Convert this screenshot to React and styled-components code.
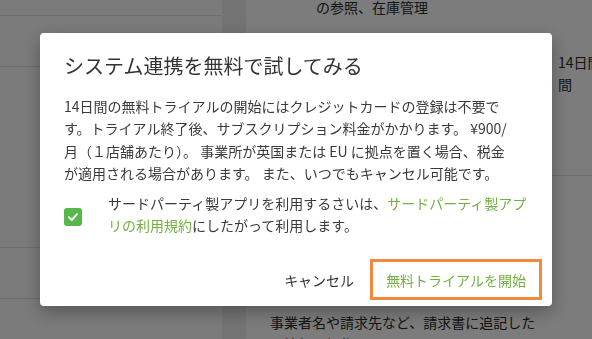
import React from "react";
import styled, { createGlobalStyle } from "styled-components";

const Global = createGlobalStyle`
  html, body { margin: 0; padding: 0; }
  body {
    font-family: "Noto Sans CJK JP", "Noto Sans", sans-serif;
    color: #333;
    overflow: hidden;
  }
`;

const App = () => {
  return (
    <>
      <Global />
      <Page>
        <Sidebar>
          <Row h={16} />
          <Row h={51} />
          <Row h={181} />
          <Row h={51} />
          <Row h={40} last />
        </Sidebar>
        <Gutter />
        <Main>
          <TopNote>の参照、在庫管理</TopNote>
          <CardRow>
            <CardCol />
            <CardCol>
              14日間の無料ト
              <br />
              間
            </CardCol>
          </CardRow>
          <BottomNote>
            事業者名や請求先など、請求書に追記した
            <br />
            い情報を編集します。
          </BottomNote>
        </Main>
      </Page>

      <Overlay>
        <Dialog>
          <Title>システム連携を無料で試してみる</Title>
          <Body>
            14日間の無料トライアルの開始にはクレジットカードの登録は不要です。トライアル終了後、サブスクリプション料金がかかります。 ¥900/月（１店舗あたり）。 事業所が英国または EU に拠点を置く場合、税金が適用される場合があります。 また、いつでもキャンセル可能です。
          </Body>
          <CheckRow>
            <CheckCell>
              <CheckBox>
                <svg width="12" height="12" viewBox="0 0 12 12">
                  <path
                    d="M2 6.3 L4.8 9 L10 3.2"
                    fill="none"
                    stroke="#fff"
                    strokeWidth="2"
                    strokeLinecap="round"
                    strokeLinejoin="round"
                  />
                </svg>
              </CheckBox>
            </CheckCell>
            <Label>
              サードパーティ製アプリを利用するさいは、
              <Link>サードパーティ製アプリの利用規約</Link>
              にしたがって利用します。
            </Label>
          </CheckRow>
          <Footer>
            <Button>キャンセル</Button>
            <Button primary>無料トライアルを開始</Button>
          </Footer>
        </Dialog>
      </Overlay>
    </>
  );
};

export default App;

const Page = styled.div`
  display: flex;
  width: 100%;
  height: 100vh;
  background: #f8f8f8;
`;

const Sidebar = styled.div`
  width: 222px;
  flex-shrink: 0;
  background: #f6f6f6;
  display: flex;
  flex-direction: column;
`;

const Row = styled.div`
  height: ${(p) => p.h}px;
  flex-shrink: 0;
  box-sizing: border-box;
  border-bottom: ${(p) => (p.last ? "none" : "1px solid #dcdcdc")};
`;

const Gutter = styled.div`
  width: 24px;
  flex-shrink: 0;
  background: #e8e8e8;
`;

const Main = styled.div`
  flex: 1;
  display: flex;
  flex-direction: column;
  padding-left: 24px;
  font-size: 14px;
  color: #2a2a2a;

  & > * {
    flex-shrink: 0;
  }
`;

const TopNote = styled.div`
  padding-left: 46px;
  line-height: 14px;
`;

const CardRow = styled.div`
  display: grid;
  grid-template-columns: 288px 1fr;
  margin-top: 37px;
  height: 125px;
  box-sizing: border-box;
  border-bottom: 1px solid #dcdcdc;
`;

const CardCol = styled.div`
  line-height: 22px;
  white-space: nowrap;
`;

const BottomNote = styled.div`
  margin-top: 135px;
  line-height: 22px;
`;

const Overlay = styled.div`
  position: fixed;
  inset: 0;
  background: rgba(0, 0, 0, 0.5);
  display: flex;
  align-items: center;
  justify-content: center;
`;

const Dialog = styled.div`
  width: 512px;
  box-sizing: border-box;
  background: #fff;
  border-radius: 4px;
  box-shadow: 0 6px 18px rgba(0, 0, 0, 0.3);
  padding: 19px 0 6px;
  display: flex;
  flex-direction: column;
`;

const Title = styled.h2`
  margin: 0;
  padding: 0 24px;
  font-size: 20px;
  line-height: 28px;
  font-weight: 400;
  color: #333;
`;

const Body = styled.p`
  margin: 15px 0 0 24px;
  width: 448px;
  font-size: 14px;
  line-height: 22.4px;
  color: #3a3a3a;
`;

const CheckRow = styled.div`
  display: flex;
  align-items: center;
  margin: 8px 24px 0;
`;

const CheckCell = styled.div`
  width: 44px;
  flex-shrink: 0;
  display: flex;
  align-items: center;
  padding-top: 6px;
`;

const CheckBox = styled.div`
  width: 18px;
  height: 18px;
  border-radius: 3px;
  background: #54b84a;
  display: flex;
  align-items: center;
  justify-content: center;
`;

const Label = styled.div`
  flex: 1;
  font-size: 14px;
  line-height: 22px;
  color: #3a3a3a;
`;

const Link = styled.span`
  color: #74b043;
`;

const Footer = styled.div`
  display: flex;
  justify-content: flex-end;
  padding: 0 10px;
  margin-top: 23px;
`;

const Button = styled.button`
  font-family: inherit;
  font-size: 14px;
  height: 41px;
  padding: 0 13px;
  background: #fff;
  border: 3px solid ${(p) => (p.primary ? "#f28a3c" : "transparent")};
  border-radius: 0;
  color: ${(p) => (p.primary ? "#74b043" : "#333")};
  cursor: pointer;
`;
